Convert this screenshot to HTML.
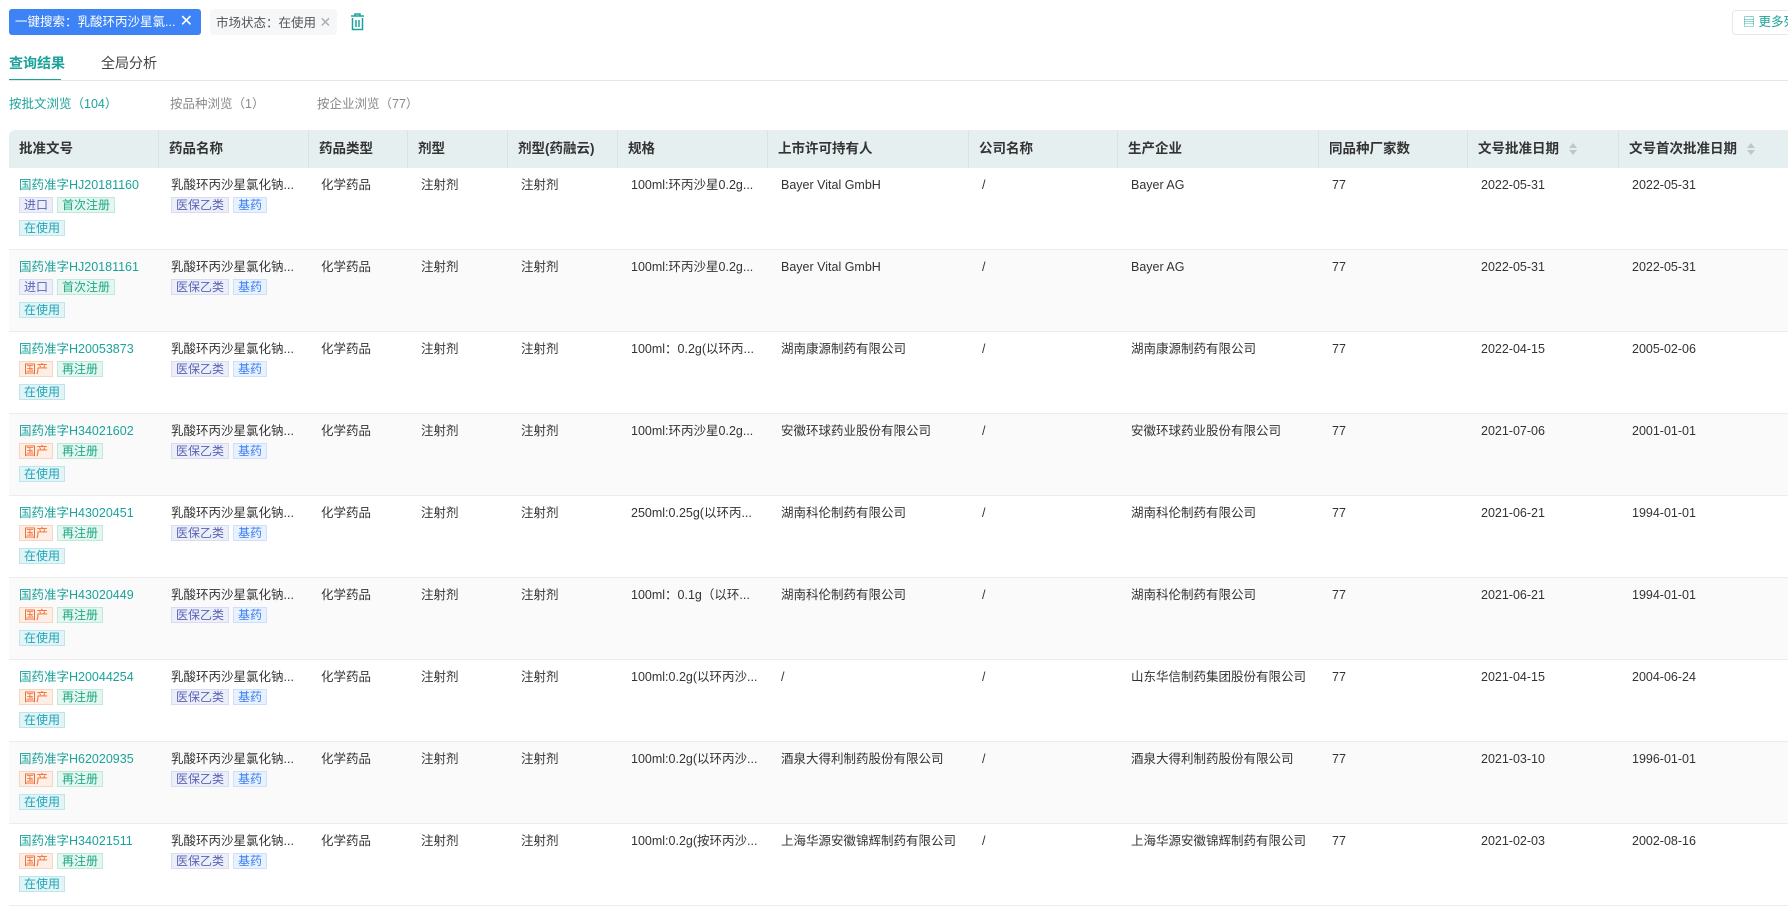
<!DOCTYPE html>
<html><head><meta charset="utf-8"><style>
*{margin:0;padding:0;box-sizing:border-box}
body{width:1788px;height:848px;overflow:hidden;background:#fff;font-family:"Liberation Sans","Noto Sans CJK SC",sans-serif;font-size:13px;color:#333;position:relative}
.a{position:absolute;white-space:nowrap}
.chip1{left:9px;top:9px;width:192px;height:26px;background:#3d83f5;border-radius:3px;color:#fff;font-size:12.5px;line-height:26px;padding-left:6px}
.chip2{left:210px;top:9px;width:127px;height:26px;background:#f6f7f8;border-radius:3px;color:#555;font-size:12.5px;line-height:26px;padding-left:6px}
.tab{font-size:14px;top:53px;line-height:20px}
.sub{top:95px;font-size:12.5px;color:#888;line-height:18px}
.hdr{left:9px;top:130px;width:1779px;height:38px;background:#e6eff0;border-radius:6px 0 0 0}
.hc{top:130px;height:38px;line-height:38px;font-weight:600;font-size:13.5px;color:#333;padding-left:10px;border-left:1px solid #d6e4e5}
.row{left:9px;width:1779px;height:82px;border-bottom:1px solid #ececec}
.c{font-size:12.5px;color:#333;line-height:18px;height:18px}
.lk{color:#1ba39a}
.tg{display:inline-block;height:16px;line-height:14px;font-size:12px;padding:0 4px;border:1px solid;margin-right:4px;vertical-align:top}
.t-imp{background:#eceef8;border-color:#d8dcf0;color:#5a64b8}
.t-dom{background:#fdeee6;border-color:#f8d5c3;color:#f06a2a}
.t-reg{background:#e4f6f0;border-color:#bfe9db;color:#20a883}
.t-use{background:#e3f4f7;border-color:#bee5ec;color:#1fa6b8}
.t-yb{background:#eceef8;border-color:#d8dcf0;color:#5a64b8}
.t-jy{background:#e8f1fe;border-color:#cfe0fc;color:#3b7ef0}
.sort{display:inline-block;vertical-align:middle;margin-left:10px;width:8px;height:12px;position:relative}
.sort:before{content:"";position:absolute;top:0;left:0;border:4px solid transparent;border-bottom:5px solid #c0c4cc;border-top:0}
.sort:after{content:"";position:absolute;bottom:0;left:0;border:4px solid transparent;border-top:5px solid #c0c4cc;border-bottom:0}
</style></head><body>
<div class="a chip1">一键搜索：乳酸环丙沙星氯... <span style="position:absolute;right:8px;font-size:16px">✕</span></div>
<div class="a chip2">市场状态：在使用 <span style="color:#aaa;font-size:14px">✕</span></div>
<svg class="a" style="left:349px;top:12px" width="17" height="20" viewBox="0 0 17 20"><path d="M2 4h13M6 4V2h5v2M3.5 6v11.5h10V6M7 8v7M10 8v7" stroke="#1ba39a" stroke-width="1.5" fill="none"/></svg>
<div class="a" style="left:1732px;top:10px;width:70px;height:25px;border:1px solid #e5e7ea;border-radius:4px;color:#1ba39a;font-size:12.5px;line-height:23px;padding-left:10px"><span style="font-size:12px">▤</span> 更多列</div>
<div class="a tab" style="left:9px;color:#1ba39a;font-weight:600">查询结果</div>
<div class="a" style="left:9px;top:79px;width:52px;height:2px;background:#1ba39a"></div>
<div class="a tab" style="left:101px;color:#444">全局分析</div>
<div class="a" style="left:9px;top:80px;width:1779px;height:1px;background:#e4e6ea"></div>
<div class="a sub" style="left:9px;color:#1ba39a">按批文浏览（104）</div>
<div class="a sub" style="left:170px">按品种浏览（1）</div>
<div class="a sub" style="left:317px">按企业浏览（77）</div>
<div class="a hdr"></div>
<div class="a hc" style="left:9px;border:0">批准文号</div>
<div class="a hc" style="left:158px">药品名称</div>
<div class="a hc" style="left:308px">药品类型</div>
<div class="a hc" style="left:407px">剂型</div>
<div class="a hc" style="left:507px">剂型(药融云)</div>
<div class="a hc" style="left:617px">规格</div>
<div class="a hc" style="left:767px">上市许可持有人</div>
<div class="a hc" style="left:968px">公司名称</div>
<div class="a hc" style="left:1117px">生产企业</div>
<div class="a hc" style="left:1318px">同品种厂家数</div>
<div class="a hc" style="left:1467px">文号批准日期<span class="sort"></span></div>
<div class="a hc" style="left:1618px">文号首次批准日期<span class="sort"></span></div>
<div id="rows"></div>
<script>
var d=[
["国药准字HJ20181160",1,"100ml:环丙沙星0.2g...","Bayer Vital GmbH","Bayer AG","2022-05-31","2022-05-31"],
["国药准字HJ20181161",1,"100ml:环丙沙星0.2g...","Bayer Vital GmbH","Bayer AG","2022-05-31","2022-05-31"],
["国药准字H20053873",0,"100ml：0.2g(以环丙...","湖南康源制药有限公司","湖南康源制药有限公司","2022-04-15","2005-02-06"],
["国药准字H34021602",0,"100ml:环丙沙星0.2g...","安徽环球药业股份有限公司","安徽环球药业股份有限公司","2021-07-06","2001-01-01"],
["国药准字H43020451",0,"250ml:0.25g(以环丙...","湖南科伦制药有限公司","湖南科伦制药有限公司","2021-06-21","1994-01-01"],
["国药准字H43020449",0,"100ml：0.1g（以环...","湖南科伦制药有限公司","湖南科伦制药有限公司","2021-06-21","1994-01-01"],
["国药准字H20044254",0,"100ml:0.2g(以环丙沙...","/","山东华信制药集团股份有限公司","2021-04-15","2004-06-24"],
["国药准字H62020935",0,"100ml:0.2g(以环丙沙...","酒泉大得利制药股份有限公司","酒泉大得利制药股份有限公司","2021-03-10","1996-01-01"],
["国药准字H34021511",0,"100ml:0.2g(按环丙沙...","上海华源安徽锦辉制药有限公司","上海华源安徽锦辉制药有限公司","2021-02-03","2002-08-16"]];
var h="";
d.forEach(function(r,i){var t=168+i*82;
h+='<div class="a row" style="top:'+t+'px;background:'+(i%2?'#fafafa':'#fff')+'"></div>';
var y=t+8;
h+='<div class="a c lk" style="left:19px;top:'+y+'px">'+r[0]+'</div>';
h+='<div class="a" style="left:19px;top:'+(t+29)+'px"><span class="tg '+(r[1]?'t-imp':'t-dom')+'">'+(r[1]?'进口':'国产')+'</span><span class="tg t-reg">'+(r[1]?'首次注册':'再注册')+'</span></div>';
h+='<div class="a" style="left:19px;top:'+(t+52)+'px"><span class="tg t-use">在使用</span></div>';
h+='<div class="a c" style="left:171px;top:'+y+'px">乳酸环丙沙星氯化钠...</div>';
h+='<div class="a" style="left:171px;top:'+(t+29)+'px"><span class="tg t-yb">医保乙类</span><span class="tg t-jy">基药</span></div>';
h+='<div class="a c" style="left:321px;top:'+y+'px">化学药品</div>';
h+='<div class="a c" style="left:421px;top:'+y+'px">注射剂</div>';
h+='<div class="a c" style="left:521px;top:'+y+'px">注射剂</div>';
h+='<div class="a c" style="left:631px;top:'+y+'px">'+r[2]+'</div>';
h+='<div class="a c" style="left:781px;top:'+y+'px">'+r[3]+'</div>';
h+='<div class="a c" style="left:982px;top:'+y+'px">/</div>';
h+='<div class="a c" style="left:1131px;top:'+y+'px">'+r[4]+'</div>';
h+='<div class="a c" style="left:1332px;top:'+y+'px">77</div>';
h+='<div class="a c" style="left:1481px;top:'+y+'px">'+r[5]+'</div>';
h+='<div class="a c" style="left:1632px;top:'+y+'px">'+r[6]+'</div>';
});
document.getElementById("rows").innerHTML=h;
</script>
</body></html>
